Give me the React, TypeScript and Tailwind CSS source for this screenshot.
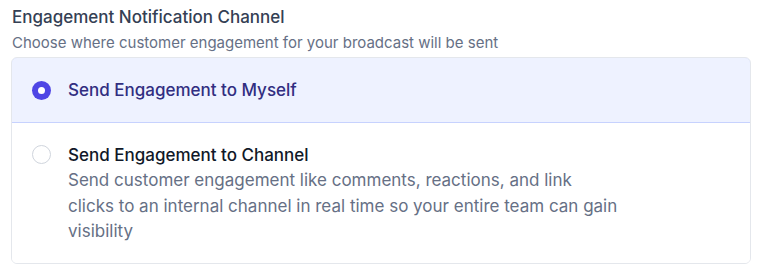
import React, { useState } from 'react';

const options = [
  { id: 'myself', label: 'Send Engagement to Myself', desc: null },
  {
    id: 'channel',
    label: 'Send Engagement to Channel',
    desc: ['Send customer engagement like comments, reactions, and link', 'clicks to an internal channel in real time so your entire team can gain', 'visibility'],
  },
];

export default function App() {
  const [selected, setSelected] = useState('myself');

  return (
    <div className="w-[765px] h-[278px] bg-white px-[11px] pt-[5px] font-['Inter',sans-serif]">
      <h2 className="pl-px text-[17px] leading-6 font-medium text-[#344054]">Engagement Notification Channel</h2>
      <p className="pl-px mt-1 text-[15px] leading-5 text-[#667085]">Choose where customer engagement for your broadcast will be sent</p>

      <div className="mt-1 w-[740px] rounded-md border border-[#e4e7ec] overflow-hidden">
        {options.map((o, i) => {
          const active = selected === o.id;
          return (
            <label
              key={o.id}
              onClick={() => setSelected(o.id)}
              className={`flex cursor-pointer gap-[17px] px-5 ${
                active ? 'bg-[#eef2ff]' : 'bg-white'
              } ${i === 0 ? 'items-center h-[66px] border-b border-[#c7d2fe] -m-px mb-0 border-t border-x rounded-t-md' : 'items-start pt-[20px] pb-[18px]'}`}
            >
              <span
                className={`flex shrink-0 items-center justify-center w-[19px] h-[19px] rounded-full ${
                  active ? 'bg-[#4f46e5]' : 'bg-white border border-[#d0d5dd]'
                } ${o.desc ? 'mt-[2px]' : ''}`}
              >
                {active && <span className="w-[7px] h-[7px] rounded-full bg-white" />}
              </span>
              <div>
                <div className={`text-[17px] leading-6 font-medium ${active ? 'text-[#312e81]' : 'text-[#101828]'}`}>{o.label}</div>
                {o.desc && (
                  <div className="mt-px text-[17px] leading-[25.5px] text-[#667085]">
                    {o.desc.map((l) => (
                      <div key={l}>{l}</div>
                    ))}
                  </div>
                )}
              </div>
            </label>
          );
        })}
      </div>
    </div>
  );
}
